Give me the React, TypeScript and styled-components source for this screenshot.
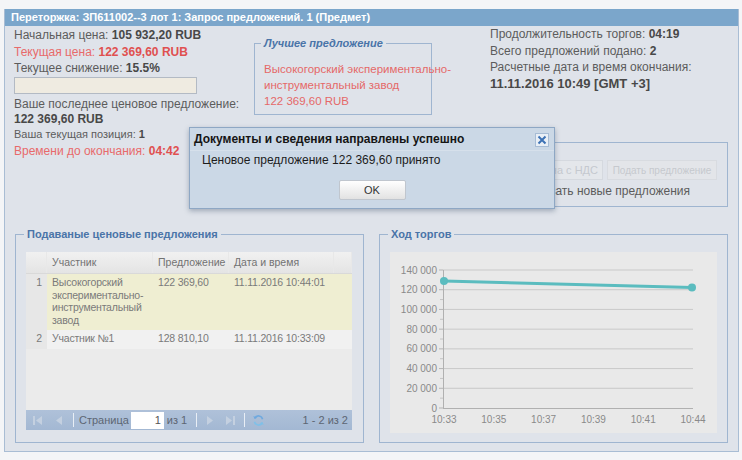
import styled, { createGlobalStyle } from "styled-components";

const GlobalStyle = createGlobalStyle`
  html, body {
    margin: 0;
    padding: 0;
    background: #f4f5f7;
  }
  body {
    font-family: "Liberation Sans", Arial, sans-serif;
    font-size: 12px;
    color: #5a5a5a;
  }
  * {
    box-sizing: border-box;
  }
`;

const bids = [
  {
    n: 1,
    name: "Высокогорский экспериментально-инструментальный завод",
    price: "122 369,60",
    date: "11.11.2016 10:44:01",
    best: true,
  },
  { n: 2, name: "Участник №1", price: "128 810,10", date: "11.11.2016 10:33:09", best: false },
];

const yTicks = [140000, 120000, 100000, 80000, 60000, 40000, 20000, 0];
const xTicks = ["10:33", "10:35", "10:37", "10:39", "10:41", "10:44"];
const points = [
  { x: 54, v: 128810.1 },
  { x: 302, v: 122369.6 },
];
const yOf = (v: number) => 156 - (v * 138) / 140000;
const fmt = (v: number) => (v === 0 ? "0" : `${Math.floor(v / 1000)} 000`);

const App = () => {
  return (
    <>
      <GlobalStyle />
      <Window>
        <Header>Переторжка: ЗП611002--3 лот 1: Запрос предложений. 1 (Предмет)</Header>
        <Body>
          <TopArea>
            <LeftCol>
              <Line>
                Начальная цена: <Value>105 932,20 RUB</Value>
              </Line>
              <Line $red>
                Текущая цена: <Value $red>122 369,60 RUB</Value>
              </Line>
              <Line>
                Текущее снижение: <Value>15.5%</Value>
              </Line>
              <ProgressBar />
              <Line $top={2}>Ваше последнее ценовое предложение:</Line>
              <Line $h={15}>
                <Value>122 369,60 RUB</Value>
              </Line>
              <Line $h={15} $size={11}>
                Ваша текущая позиция: <Value>1</Value>
              </Line>
              <Line $h={18} $red>
                Времени до окончания: <Value $red>04:42</Value>
              </Line>
            </LeftCol>

            <RightArea>
              <InfoRow>
                <BestBox>
                  <Legend $italic $shift={-3}>
                    Лучшее предложение
                  </Legend>
                  <RedText>Высокогорский экспериментально-</RedText>
                  <RedText>инструментальный завод</RedText>
                  <RedText>122 369,60 RUB</RedText>
                </BestBox>
                <InfoCol>
                  <Line>
                    Продолжительность торгов: <Value>04:19</Value>
                  </Line>
                  <Line>
                    Всего предложений подано: <Value>2</Value>
                  </Line>
                  <Line>Расчетные дата и время окончания:</Line>
                  <Line $size={13}>
                    <Value>11.11.2016 10:49 [GMT +3]</Value>
                  </Line>
                </InfoCol>
              </InfoRow>

              <BidBox>
                <BidRow>
                  <PriceInput disabled placeholder="Цена с НДС" />
                  <SubmitButton disabled>Подать предложение</SubmitButton>
                </BidRow>
                <CheckRow>
                  <input type="checkbox" />
                  Не подавать новые предложения
                </CheckRow>
              </BidBox>
            </RightArea>
          </TopArea>

          <BottomArea>
            <Panel>
              <Legend $shift={-2}>Подаваные ценовые предложения</Legend>
              <Grid>
                <GridHead>
                  <HeadCell $w={21} />
                  <HeadCell $w={106}>Участник</HeadCell>
                  <HeadCell $w={76}>Предложение</HeadCell>
                  <HeadCell $w={105}>Дата и время</HeadCell>
                  <HeadCell $w={18} />
                </GridHead>
                {bids.map((b) => (
                  <GridRow key={b.n} $best={b.best}>
                    <NumCell>{b.n}</NumCell>
                    <Cell $w={106}>{b.name}</Cell>
                    <Cell $w={76} $nowrap>
                      {b.price}
                    </Cell>
                    <Cell $w={105} $nowrap>
                      {b.date}
                    </Cell>
                  </GridRow>
                ))}
                <GridFill />
                <Pager>
                  <IconSlot>
                    <svg width="9" height="9" viewBox="0 0 9 9">
                      <rect x="0" y="0" width="2" height="9" fill="#c4d0e0" />
                      <path d="M9 0 L3 4.5 L9 9 Z" fill="#c4d0e0" />
                    </svg>
                  </IconSlot>
                  <IconSlot>
                    <svg width="6" height="9" viewBox="0 0 6 9">
                      <path d="M6 0 L0 4.5 L6 9 Z" fill="#c4d0e0" />
                    </svg>
                  </IconSlot>
                  <PagerSep $l={4} $r={5} />
                  <PagerText>Страница</PagerText>
                  <PageInput defaultValue="1" />
                  <PagerText $l={3}>из 1</PagerText>
                  <PagerSep $l={7} $r={2} />
                  <IconSlot>
                    <svg width="6" height="9" viewBox="0 0 6 9">
                      <path d="M0 0 L6 4.5 L0 9 Z" fill="#c4d0e0" />
                    </svg>
                  </IconSlot>
                  <IconSlot>
                    <svg width="9" height="9" viewBox="0 0 9 9">
                      <path d="M0 0 L6 4.5 L0 9 Z" fill="#c4d0e0" />
                      <rect x="7" y="0" width="2" height="9" fill="#c4d0e0" />
                    </svg>
                  </IconSlot>
                  <PagerSep $l={3} $r={3} />
                  <IconSlot>
                    <svg width="13" height="13" viewBox="0 0 16 16" fill="none">
                      <path d="M13 6.5A5.2 5.2 0 0 0 3.4 5" stroke="#6fa9df" strokeWidth="2" />
                      <path d="M3 9.5A5.2 5.2 0 0 0 12.6 11" stroke="#7fc0e8" strokeWidth="2" />
                      <path d="M1.5 2.5 L3.2 6.2 L6.6 4.6 Z" fill="#6fa9df" />
                      <path d="M14.5 13.5 L12.8 9.8 L9.4 11.4 Z" fill="#7fc0e8" />
                    </svg>
                  </IconSlot>
                  <PagerInfo>1 - 2 из 2</PagerInfo>
                </Pager>
              </Grid>
            </Panel>

            <Panel>
              <Legend $shift={-2}>Ход торгов</Legend>
              <ChartArea>
                <svg width="327" height="181" viewBox="0 0 327 181">
                  {yTicks.map((v) => (
                    <g key={v}>
                      {v > 0 && <line x1="53" x2="303" y1={yOf(v)} y2={yOf(v)} stroke="#c9c9c9" strokeWidth="1" />}
                      <line x1="49" x2="53" y1={yOf(v)} y2={yOf(v)} stroke="#b5b5b5" strokeWidth="1" />
                      {v > 0 && (
                        <line x1="50" x2="53" y1={yOf(v - 10000)} y2={yOf(v - 10000)} stroke="#c4c4c4" strokeWidth="1" />
                      )}
                      <text
                        x="47"
                        y={yOf(v) + 3.5}
                        textAnchor="end"
                        fontSize="10"
                        fontFamily="Liberation Sans, Arial, sans-serif"
                        fill="#8a8a8a"
                      >
                        {fmt(v)}
                      </text>
                    </g>
                  ))}
                  <line x1="53.5" x2="53.5" y1={yOf(140000)} y2={yOf(0)} stroke="#b0b0b0" strokeWidth="1" />
                  <line x1="53" x2="303" y1={yOf(0) + 0.5} y2={yOf(0) + 0.5} stroke="#b0b0b0" strokeWidth="1" />
                  {xTicks.map((t, i) => (
                    <text
                      key={t}
                      x={54 + i * 49.8}
                      y="171"
                      textAnchor="middle"
                      fontSize="10"
                      fontFamily="Liberation Sans, Arial, sans-serif"
                      fill="#8a8a8a"
                    >
                      {t}
                    </text>
                  ))}
                  <polyline
                    points={points.map((p) => `${p.x},${yOf(p.v)}`).join(" ")}
                    fill="none"
                    stroke="#5bbcbf"
                    strokeWidth="3"
                  />
                  {points.map((p) => (
                    <circle key={p.x} cx={p.x} cy={yOf(p.v)} r="4" fill="#5bbcbf" />
                  ))}
                </svg>
              </ChartArea>
            </Panel>
          </BottomArea>

          <Dialog>
            <DialogTitle>
              Документы и сведения направлены успешно
              <CloseBox>
                <svg width="10" height="10" viewBox="0 0 10 10">
                  <path d="M1.5 1.5 L8.5 8.5 M8.5 1.5 L1.5 8.5" stroke="#3d72b5" strokeWidth="2" />
                </svg>
              </CloseBox>
            </DialogTitle>
            <DialogText>Ценовое предложение 122 369,60 принято</DialogText>
            <DialogButtons>
              <OkButton>OK</OkButton>
            </DialogButtons>
          </Dialog>
        </Body>
      </Window>
    </>
  );
};
export default App;

const Window = styled.div`
  margin: 9px 0 0 4px;
  width: 735px;
  border: 1px solid #a9bdd4;
  border-top: none;
`;

const Header = styled.div`
  height: 17px;
  background: #7ba6cb;
  color: #fff;
  font-size: 11px;
  font-weight: bold;
  line-height: 17px;
  padding-left: 6px;
  white-space: nowrap;
  overflow: hidden;
`;

const Body = styled.div`
  position: relative;
  height: 425px;
  background: #dfe3ea;
  padding: 1px 0 0 9px;
`;

const TopArea = styled.div`
  display: flex;
`;

const LeftCol = styled.div`
  width: 240px;
  flex: none;
`;

const Line = styled.div<{ $red?: boolean; $h?: number; $size?: number; $top?: number }>`
  height: ${(p) => p.$h ?? 16.5}px;
  line-height: ${(p) => p.$h ?? 16.5}px;
  margin-top: ${(p) => p.$top ?? 0}px;
  font-size: ${(p) => p.$size ?? 12}px;
  color: ${(p) => (p.$red ? "#e86a6a" : "#5c5c5c")};
  white-space: nowrap;
`;

const Value = styled.b<{ $red?: boolean }>`
  color: ${(p) => (p.$red ? "#e05050" : "#484848")};
`;

const ProgressBar = styled.div`
  width: 183px;
  height: 17px;
  background: #efebe1;
  border: 1px solid #b3bac4;
`;

const RightArea = styled.div`
  flex: 1;
  display: flex;
  flex-direction: column;
`;

const InfoRow = styled.div`
  display: flex;
`;

const Fieldset = styled.fieldset`
  margin: 0;
  border: 1px solid #9fb5d0;
  min-inline-size: 0;
`;

const Legend = styled.legend<{ $italic?: boolean; $shift?: number }>`
  margin-left: ${(p) => p.$shift ?? 0}px;
  padding: 0 3px;
  font-size: 11px;
  line-height: 13px;
  font-weight: bold;
  font-style: ${(p) => (p.$italic ? "italic" : "normal")};
  color: #4a74a8;
  white-space: nowrap;
`;

const BestBox = styled(Fieldset)`
  width: 178px;
  height: 78px;
  margin-top: 10px;
  padding: 11px 0 0 9px;
`;

const RedText = styled.div`
  line-height: 16px;
  font-size: 11.5px;
  color: #e56868;
  white-space: nowrap;
`;

const InfoCol = styled.div`
  margin-left: 58px;
  margin-top: -1px;
`;

const BidBox = styled(Fieldset)`
  width: 474px;
  height: 65px;
  margin-top: 27px;
  padding: 17px 10px 0 0;
`;

const BidRow = styled.div`
  display: flex;
  justify-content: flex-end;
  gap: 4px;
`;

const PriceInput = styled.input`
  width: 150px;
  height: 20px;
  border: 1px solid #d5d9df;
  background: #e4e7eb;
  font: 11px "Liberation Sans", Arial, sans-serif;
  text-align: right;
  padding-right: 4px;
  &::placeholder {
    color: #c5c9cf;
  }
`;

const SubmitButton = styled.button`
  width: 110px;
  height: 20px;
  border: 1px solid #d8dbe0;
  background: #e3e5e9;
  color: #c6c9ce;
  font: 10px "Liberation Sans", Arial, sans-serif;
  padding: 0;
  white-space: nowrap;
  overflow: hidden;
`;

const CheckRow = styled.label`
  display: flex;
  align-items: center;
  justify-content: flex-end;
  gap: 4px;
  margin: 3px 27px 0 0;
  height: 16px;
  color: #5c5c5c;
  white-space: nowrap;
  input {
    margin: 0;
    width: 12px;
    height: 12px;
  }
`;

const BottomArea = styled.div`
  display: flex;
  gap: 15px;
  margin: 21px 0 0 1px;
`;

const Panel = styled(Fieldset)`
  width: 349px;
  height: 215px;
  padding: 11px 10px 0 10px;
`;

const Grid = styled.div`
  width: 326px;
  height: 178px;
  background: #ebebeb;
  display: flex;
  flex-direction: column;
`;

const GridHead = styled.div`
  display: flex;
  height: 22px;
  flex: none;
  background: linear-gradient(#f1f1f1, #e4e4e4);
  border-bottom: 1px solid #d9d9d9;
`;

const HeadCell = styled.div<{ $w: number }>`
  width: ${(p) => p.$w}px;
  flex: none;
  padding-left: 5px;
  line-height: 21px;
  font-size: 10.5px;
  color: #727272;
  border-right: 1px solid #e8e8e8;
  white-space: nowrap;
`;

const GridRow = styled.div<{ $best?: boolean }>`
  display: flex;
  flex: none;
  background: ${(p) => (p.$best ? "#efeed2" : "#f1f1f1")};
  padding: 2px 0 4px;
  font-size: 10.5px;
  letter-spacing: -0.2px;
  color: #7a7a7a;
  line-height: 12.5px;
`;

const NumCell = styled.div`
  width: 21px;
  flex: none;
  margin: -2px 0 -4px;
  padding: 2px 5px 0 0;
  text-align: right;
  background: #e7e7e7;
`;

const Cell = styled.div<{ $w: number; $nowrap?: boolean }>`
  width: ${(p) => p.$w}px;
  flex: none;
  padding: 0 4px 0 5px;
  white-space: ${(p) => (p.$nowrap ? "nowrap" : "normal")};
`;

const GridFill = styled.div`
  flex: 1;
`;

const Pager = styled.div`
  height: 20px;
  flex: none;
  display: flex;
  align-items: center;
  padding: 0 4px 0 1px;
  background: linear-gradient(#afc1d9, #a3b8d3);
  font-size: 11px;
  color: #5d6673;
`;

const IconSlot = styled.div`
  width: 21px;
  display: flex;
  justify-content: center;
  align-items: center;
`;

const PagerSep = styled.div<{ $l: number; $r: number }>`
  width: 1px;
  height: 14px;
  background: #e8eef5;
  margin: 0 ${(p) => p.$r}px 0 ${(p) => p.$l}px;
`;

const PagerText = styled.span<{ $l?: number }>`
  margin: 0 2px 0 ${(p) => p.$l ?? 0}px;
  white-space: nowrap;
`;

const PageInput = styled.input`
  width: 33px;
  height: 17px;
  border: none;
  background: #fff;
  text-align: right;
  padding: 0 3px;
  font: 11px "Liberation Sans", Arial, sans-serif;
  color: #555;
`;

const PagerInfo = styled.span`
  margin-left: auto;
  white-space: nowrap;
`;

const ChartArea = styled.div`
  width: 327px;
  height: 181px;
  background: #e9e9e9;
`;

const Dialog = styled.div`
  position: absolute;
  left: 184px;
  top: 101px;
  width: 366px;
  height: 82px;
  background: #cbd8e6;
  border: 1px solid #8ea7c4;
  box-shadow: 0 2px 5px rgba(40, 60, 90, 0.35);
  display: flex;
  flex-direction: column;
`;

const DialogTitle = styled.div`
  position: relative;
  height: 23px;
  line-height: 23px;
  padding-left: 4px;
  font-size: 12px;
  font-weight: bold;
  color: #151515;
  border-bottom: 1px solid #d6e0eb;
`;

const CloseBox = styled.div`
  position: absolute;
  top: 5px;
  right: 5px;
  width: 14px;
  height: 14px;
  display: flex;
  align-items: center;
  justify-content: center;
  background: #e9eff6;
  border: 1px solid #a7bcd5;
`;

const DialogText = styled.div`
  padding-left: 12px;
  margin-top: 1px;
  line-height: 16px;
  font-size: 12px;
  color: #1c1c1c;
`;

const DialogButtons = styled.div`
  display: flex;
  justify-content: center;
  margin-top: 12px;
`;

const OkButton = styled.button`
  width: 67px;
  height: 20px;
  padding: 0;
  border: 1px solid #c0c6ce;
  border-radius: 2px;
  background: linear-gradient(#ffffff, #e2e2e2);
  font: 11px "Liberation Sans", Arial, sans-serif;
  color: #333;
`;
